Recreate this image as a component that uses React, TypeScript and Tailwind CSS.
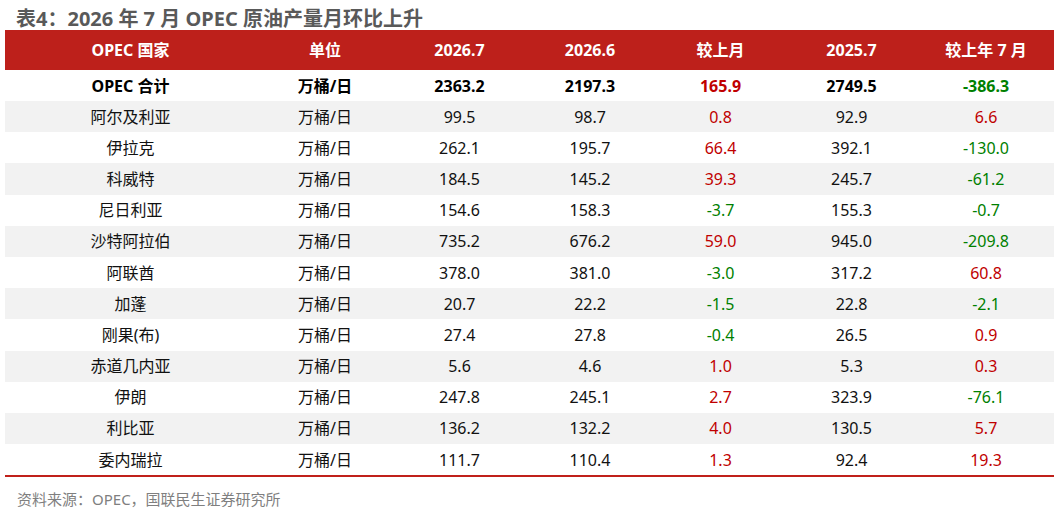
const rows: [string, string, string, string, string, string][] = [
  ["阿尔及利亚", "99.5", "98.7", "0.8", "92.9", "6.6"],
  ["伊拉克", "262.1", "195.7", "66.4", "392.1", "-130.0"],
  ["科威特", "184.5", "145.2", "39.3", "245.7", "-61.2"],
  ["尼日利亚", "154.6", "158.3", "-3.7", "155.3", "-0.7"],
  ["沙特阿拉伯", "735.2", "676.2", "59.0", "945.0", "-209.8"],
  ["阿联酋", "378.0", "381.0", "-3.0", "317.2", "60.8"],
  ["加蓬", "20.7", "22.2", "-1.5", "22.8", "-2.1"],
  ["刚果(布)", "27.4", "27.8", "-0.4", "26.5", "0.9"],
  ["赤道几内亚", "5.6", "4.6", "1.0", "5.3", "0.3"],
  ["伊朗", "247.8", "245.1", "2.7", "323.9", "-76.1"],
  ["利比亚", "136.2", "132.2", "4.0", "130.5", "5.7"],
  ["委内瑞拉", "111.7", "110.4", "1.3", "92.4", "19.3"],
];

const grid = "grid grid-cols-[251px_138px_131px_130px_131px_131px_138px] items-center text-center";

function changeColor(v: string) {
  return v.startsWith("-") ? "text-[#008000]" : "text-[#c00000]";
}

export default function App() {
  return (
    <div
      className="w-[1059px] h-[514px] bg-white px-[5px] pt-[7px]"
      style={{ fontFamily: "'Noto Sans', 'Noto Sans CJK SC', sans-serif" }}
    >
      <h1 className="pl-[11px] h-[23px] text-[20px] leading-[23px] font-bold text-[#595959]">
        表4：2026 年 7 月 OPEC 原油产量月环比上升
      </h1>

      <div className="border-b-2 border-[#c0201a]">
        <div className={`${grid} h-[40px] bg-[#bd201b] text-white font-bold text-[16px]`}>
          <div>OPEC 国家</div>
          <div>单位</div>
          <div>2026.7</div>
          <div>2026.6</div>
          <div>较上月</div>
          <div>2025.7</div>
          <div>较上年 7 月</div>
        </div>

        <div className={`${grid} h-[31px] font-bold text-[16px] text-black`}>
          <div>OPEC 合计</div>
          <div>万桶/日</div>
          <div>2363.2</div>
          <div>2197.3</div>
          <div className={changeColor("165.9")}>165.9</div>
          <div>2749.5</div>
          <div className={changeColor("-386.3")}>-386.3</div>
        </div>

        {rows.map(([name, a, b, c, d, e], i) => (
          <div
            key={name}
            className={`${grid} h-[31.2px] text-[16px] text-[#111] ${i % 2 === 0 ? "bg-[#f2f2f2]" : "bg-white"}`}
          >
            <div>{name}</div>
            <div>万桶/日</div>
            <div>{a}</div>
            <div>{b}</div>
            <div className={changeColor(c)}>{c}</div>
            <div>{d}</div>
            <div className={changeColor(e)}>{e}</div>
          </div>
        ))}
      </div>

      <p className="pl-[12px] pt-[11px] text-[15px] text-[#7f7f7f]">资料来源：OPEC，国联民生证券研究所</p>
    </div>
  );
}
